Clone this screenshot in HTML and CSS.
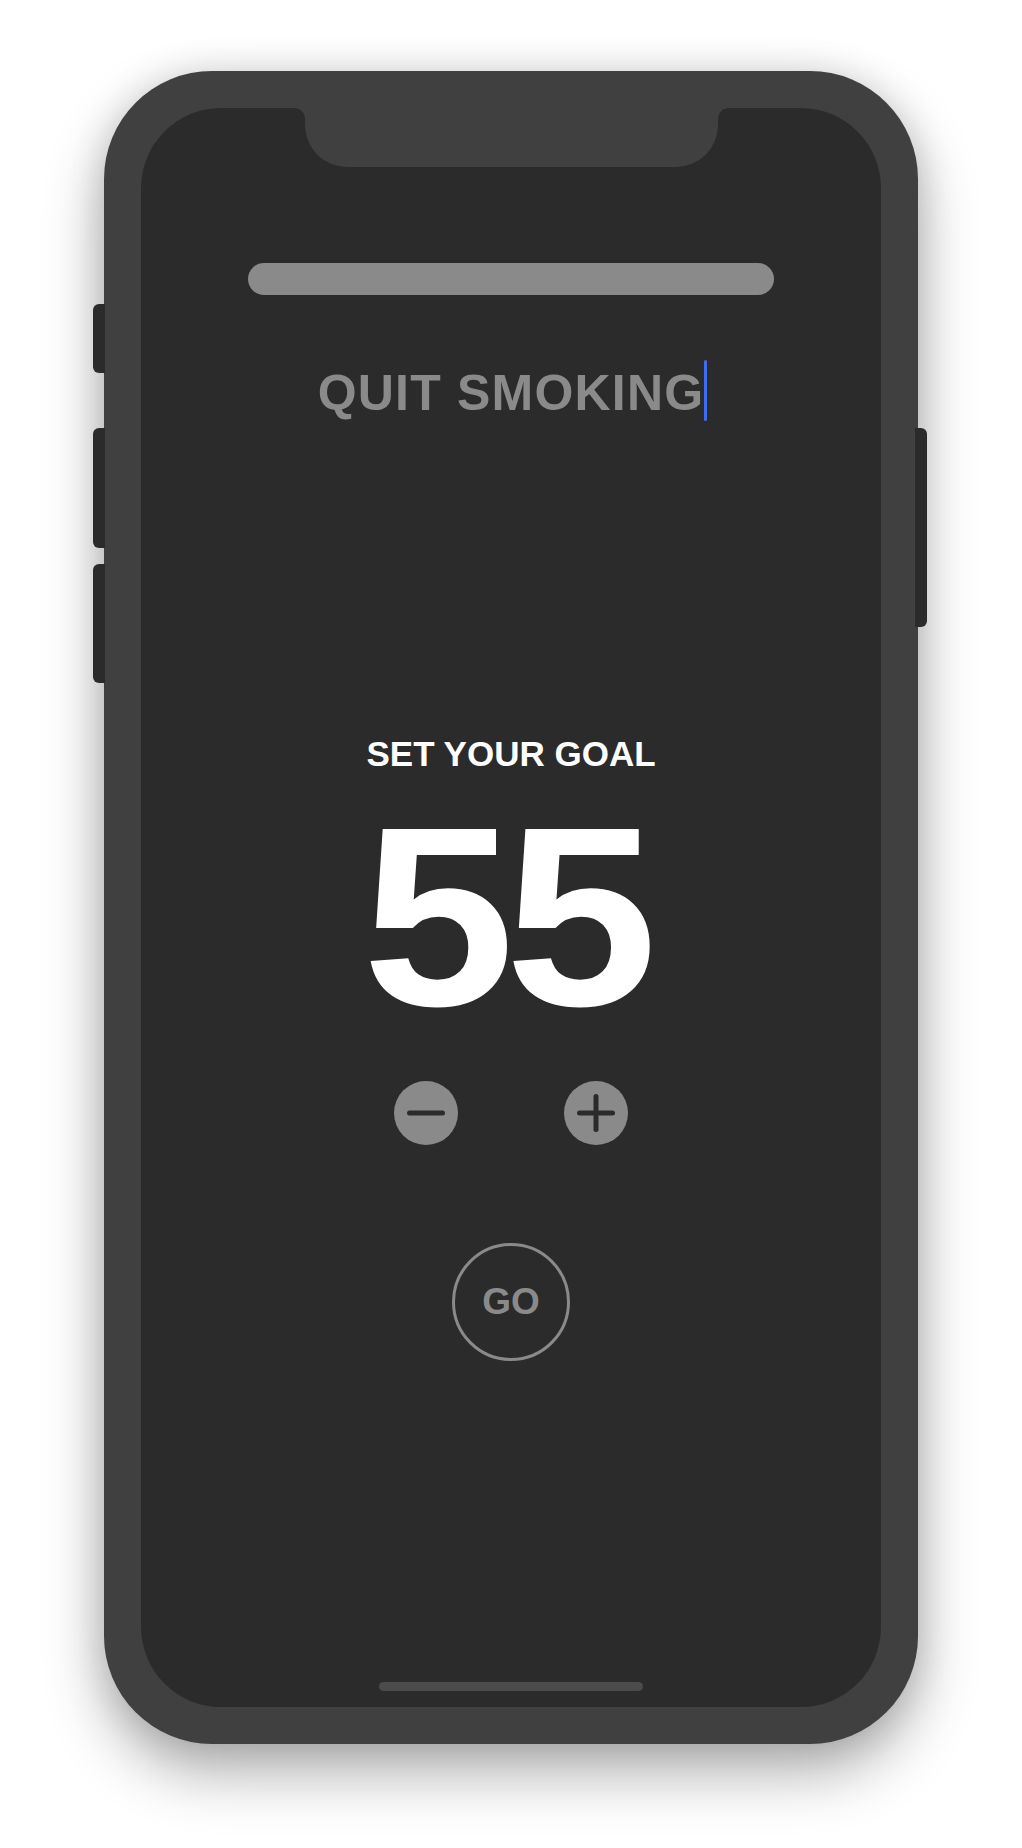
FILE: index.html
```html
<!DOCTYPE html>
<html lang="en">
<head>
<meta charset="utf-8">
<title>Quit Smoking</title>
<link rel="stylesheet" href="styles.css">
</head>
<body>
<div class="stage">
  <div class="phone">
    <span class="side-btn side-btn--mute"></span>
    <span class="side-btn side-btn--vol-up"></span>
    <span class="side-btn side-btn--vol-down"></span>
    <span class="side-btn side-btn--power"></span>
    <div class="screen">
      <div class="notch"></div>
      <div class="progress"></div>
      <div class="title-wrap">
        <h1 class="title">QUIT SMOKING</h1>
        <span class="caret"></span>
      </div>
      <div class="goal-label">SET YOUR GOAL</div>
      <div class="goal-value">55</div>
      <div class="controls">
        <button class="round-btn" aria-label="Decrease">
          <svg width="64" height="64" viewBox="0 0 64 64"><line x1="15.5" y1="32" x2="48.5" y2="32" stroke="#2b2b2b" stroke-width="5" stroke-linecap="round"/></svg>
        </button>
        <button class="round-btn" aria-label="Increase">
          <svg width="64" height="64" viewBox="0 0 64 64"><line x1="15.5" y1="32" x2="48.5" y2="32" stroke="#2b2b2b" stroke-width="5" stroke-linecap="round"/><line x1="32" y1="15.5" x2="32" y2="48.5" stroke="#2b2b2b" stroke-width="5" stroke-linecap="round"/></svg>
        </button>
      </div>
      <button class="go-btn">GO</button>
      <div class="home-indicator"></div>
    </div>
  </div>
</div>
</body>
</html>
```

FILE: styles.css
```css
html, body {
  margin: 0;
  padding: 0;
  background: #ffffff;
}
body {
  width: 1022px;
  height: 1848px;
  overflow: hidden;
  font-family: "Liberation Sans", Arial, sans-serif;
}
.stage {
  padding: 71px 0 0 104px;
}
.phone {
  position: relative;
  width: 814px;
  height: 1673px;
  box-sizing: border-box;
  padding: 37px;
  background: #404040;
  border-radius: 108px;
  box-shadow: 0 28px 60px rgba(0, 0, 0, 0.32), 0 0 36px rgba(0, 0, 0, 0.12);
}
.side-btn {
  position: absolute;
  width: 12px;
  background: #2b2b2b;
}
.side-btn--mute,
.side-btn--vol-up,
.side-btn--vol-down {
  left: -11px;
  border-radius: 6px 0 0 6px;
}
.side-btn--mute { top: 233px; height: 69px; }
.side-btn--vol-up { top: 357px; height: 120px; }
.side-btn--vol-down { top: 493px; height: 119px; }
.side-btn--power {
  right: -9px;
  top: 357px;
  height: 199px;
  border-radius: 0 6px 6px 0;
}
.screen {
  position: relative;
  height: 100%;
  box-sizing: border-box;
  background: #2b2b2b;
  border-radius: 80px;
  padding: 155px 0 16px;
  display: flex;
  flex-direction: column;
  align-items: center;
}
.notch {
  position: absolute;
  top: 0;
  left: 0;
  right: 0;
  margin: 0 auto;
  width: 413px;
  height: 59px;
  background: #404040;
  border-radius: 0 0 42px 42px;
}
.notch::before,
.notch::after {
  content: "";
  position: absolute;
  top: 0;
  width: 10px;
  height: 10px;
}
.notch::before {
  left: -10px;
  background: radial-gradient(circle at 0 100%, transparent 9.5px, #404040 10px);
}
.notch::after {
  right: -10px;
  background: radial-gradient(circle at 100% 100%, transparent 9.5px, #404040 10px);
}
.progress {
  width: 526px;
  height: 32px;
  border-radius: 16px;
  background: #8a8a8a;
}
.title-wrap {
  position: relative;
  margin-top: 73px;
}
.title {
  margin: 0;
  font-size: 50px;
  line-height: 1;
  font-weight: 700;
  letter-spacing: 1.2px;
  color: #8a8a8a;
}
.caret {
  position: absolute;
  left: 100%;
  top: -8px;
  width: 3px;
  height: 61px;
  border-radius: 1.5px;
  background: #3d6cf2;
}
.goal-label {
  margin-top: 318px;
  font-size: 35px;
  line-height: 1;
  font-weight: 700;
  color: #ffffff;
}
.goal-value {
  margin-top: 17px;
  padding-right: 12px;
  font-size: 256px;
  line-height: 1;
  font-weight: 700;
  letter-spacing: -9px;
  color: #ffffff;
  transform: scaleX(1.07);
}
.controls {
  margin-top: 37px;
  display: flex;
  gap: 106px;
}
.round-btn {
  width: 64px;
  height: 64px;
  padding: 0;
  border: 0;
  border-radius: 50%;
  background: #8a8a8a;
  display: flex;
}
.go-btn {
  margin-top: 98px;
  width: 118px;
  height: 118px;
  box-sizing: border-box;
  border: 3px solid #8a8a8a;
  border-radius: 50%;
  background: transparent;
  color: #8a8a8a;
  font-family: "Liberation Sans", Arial, sans-serif;
  font-size: 37px;
  font-weight: 700;
  padding: 0;
  display: flex;
  align-items: center;
  justify-content: center;
}
.home-indicator {
  margin-top: auto;
  width: 264px;
  height: 9px;
  border-radius: 4.5px;
  background: #4b4b4b;
}
```
